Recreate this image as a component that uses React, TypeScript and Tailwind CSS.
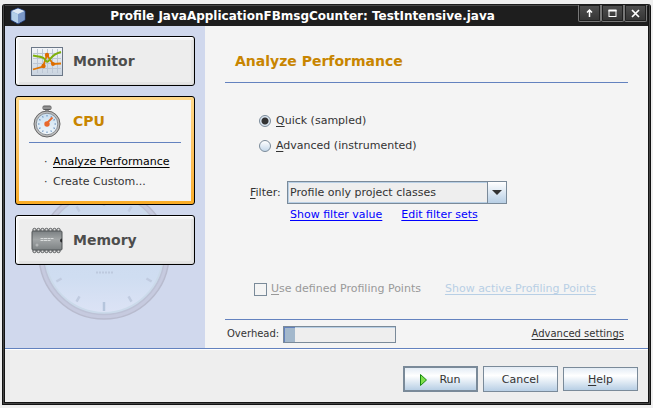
import { useState } from "react";
import type { ReactNode } from "react";

const cardBase = "relative rounded-[3px] border border-black";

function CubeIcon() {
  return (
    <svg width="18" height="18" viewBox="0 0 18 18" aria-hidden="true">
      <path d="M9 1 L16 4 V13 L9 17 L2 13 V4 Z" fill="#8fb0dc" stroke="#27407a" strokeWidth="1" />
      <path d="M9 1.500 L15.500 4 L9 7 L2.500 4 Z" fill="#dfe9f4" />
      <path d="M2.500 4.500 L9 7.300 V16.300 L2.500 12.700 Z" fill="#b4cfe8" />
      <path d="M9 7.300 L15.500 4.500 V12.700 L9 16.300 Z" fill="#7c99c8" />
    </svg>
  );
}

function MonitorIcon() {
  return (
    <svg width="32" height="29" viewBox="0 0 32 29" aria-hidden="true">
      <defs>
        <linearGradient id="chartBack" x1="0" y1="0" x2="0" y2="1">
          <stop offset="0" stopColor="#f4f6f8" />
          <stop offset="1" stopColor="#c9d3df" />
        </linearGradient>
      </defs>
      <rect x="0.500" y="0.500" width="31" height="28" fill="url(#chartBack)" stroke="#6b7787" />
      <path d="M6.500 2V26M11.500 2V26M16.500 2V26M21.500 2V26M26.500 2V26M2 6.500H30M2 11.500H30M2 16.500H30M2 21.500H30" stroke="#bcc6d4" strokeWidth="1" />
      <path d="M2 22.500 L12 19.500 L16 8 L22 17 L30 16.500" fill="none" stroke="#e07400" strokeWidth="1.800" />
      <circle cx="12.500" cy="19" r="2.200" fill="#dd6c00" />
      <circle cx="16" cy="8" r="2.200" fill="#dd6c00" />
      <circle cx="22" cy="17" r="2" fill="#dd6c00" />
      <path d="M2 8.500 C7 10 11 9 13 11.500 S16 16 18 13.500 S22 7 30 5" fill="none" stroke="#7fb00c" strokeWidth="2" />
    </svg>
  );
}

function StopwatchIcon() {
  return (
    <svg width="28" height="33" viewBox="0 0 28 33" aria-hidden="true">
      <defs>
        <linearGradient id="dial" x1="0" y1="0" x2="0" y2="1">
          <stop offset="0" stopColor="#c9dff0" />
          <stop offset="1" stopColor="#f0f6fb" />
        </linearGradient>
      </defs>
      <rect x="10" y="1" width="8" height="3.500" rx="1" fill="#b8b8b8" stroke="#5c5c5c" />
      <path d="M12 1V4.500M14 1V4.500M16 1V4.500" stroke="#5c5c5c" strokeWidth="0.800" />
      <path d="M12 5H16V8H12Z" fill="#9a9a9a" />
      <circle cx="14" cy="19" r="13" fill="#bcbcbc" stroke="#666" strokeWidth="1" />
      <circle cx="14" cy="19" r="10.800" fill="url(#dial)" stroke="#8b8f94" strokeWidth="1" />
      <g stroke="#5d86b8" strokeWidth="1">
        {[0, 30, 60, 90, 120, 150, 180, 210, 240, 270, 300, 330].map((a) => (
          <path key={a} d="M14 10V11.500" transform={`rotate(${a} 14 19)`} />
        ))}
      </g>
      <path d="M13 19 L19.500 12.500" stroke="#e8682c" strokeWidth="1.800" />
      <circle cx="14" cy="19" r="2.700" fill="#e8682c" />
    </svg>
  );
}

function MemoryIcon() {
  const pins = [3.5, 7.5, 11.5, 15.5, 19.5, 23.5, 27.5];
  return (
    <svg width="32" height="27" viewBox="0 0 32 27" aria-hidden="true">
      <defs>
        <linearGradient id="chip" x1="0" y1="0" x2="0" y2="1">
          <stop offset="0" stopColor="#7b8082" />
          <stop offset="0.450" stopColor="#a2a6a7" />
          <stop offset="1" stopColor="#7d8284" />
        </linearGradient>
      </defs>
      {pins.map((x) => (
        <g key={x} fill="#e0e0e0" stroke="#5a5d5f" strokeWidth="1">
          <circle cx={x} cy="3" r="1.700" />
          <circle cx={x} cy="24" r="1.700" />
        </g>
      ))}
      <rect x="1" y="4" width="30" height="19" rx="1" fill="url(#chip)" stroke="#505456" strokeWidth="1" />
      <path d="M9.500 11.500H22.500M9.500 13.500H19.500" stroke="#dadddd" strokeWidth="1" strokeDasharray="3 0.500" />
      <circle cx="6" cy="18" r="1.500" fill="#b3b6b7" />
      <path d="M31 11.500A2 2 0 0 0 31 15.500Z" fill="#2c2e30" />
    </svg>
  );
}

function WatermarkDial() {
  return (
    <svg className="absolute top-[159px] left-[31px]" width="136" height="137" viewBox="0 0 136 137" aria-hidden="true">
      <defs>
        <linearGradient id="face" x1="0" y1="0" x2="0" y2="1">
          <stop offset="0" stopColor="#cbd8ec" />
          <stop offset="0.700" stopColor="#cfddf1" />
          <stop offset="1" stopColor="#dce3f5" />
        </linearGradient>
      </defs>
      <circle cx="68" cy="69" r="65" fill="#c6cadf" stroke="#b8bbce" strokeWidth="1.500" />
      <circle cx="68" cy="69" r="60.500" fill="#cbdaea" stroke="#bdc2d6" strokeWidth="1.500" />
      <circle cx="68" cy="69" r="58" fill="url(#face)" />
      {[0, 30, 60, 90, 120, 150, 180, 210, 240, 270, 300, 330].map((a) => (
        <path key={a} d={a % 90 === 0 ? "M68 12V21" : "M68 14V20"} transform={`rotate(${a} 68 69)`} stroke={a % 90 === 0 ? "#b5c5dc" : "#c0cbe0"} strokeWidth="2.500" />
      ))}
      <path d="M60 87.500H77" stroke="#bdc9de" strokeWidth="2" strokeDasharray="2 1" />
    </svg>
  );
}

function NavCard({ icon, title }: { icon: ReactNode; title: string }) {
  return (
    <button
      type="button"
      className={`${cardBase} flex h-[50px] w-full items-center bg-[#ededed] text-left shadow-[inset_1px_1px_0_#fff,inset_-1px_-1px_0_#dcdcdc,inset_3px_3px_0_#f4f4f4,inset_-3px_-3px_0_#e4e4e4]`}
    >
      <span className="flex w-[57px] justify-center pl-1">{icon}</span>
      <span className="text-[14px] leading-5 font-bold text-[#4d4d4d]">{title}</span>
    </button>
  );
}

function WindowButton({ label, children }: { label: string; children: ReactNode }) {
  return (
    <button
      type="button"
      aria-label={label}
      className="flex h-[17px] w-[23px] items-center justify-center rounded-b-[2px] border border-t-0 border-[#777] bg-linear-to-b from-[#505050] to-[#343434] shadow-[inset_0_0_0_1px_#202020]"
    >
      <svg width="9" height="9" viewBox="0 0 9 9" fill="none" stroke="#fff" aria-hidden="true">
        {children}
      </svg>
    </button>
  );
}

const radioClass =
  "size-3 appearance-none rounded-full border border-[#7a8a99] bg-linear-to-b from-white to-[#c5d8ea] checked:bg-[radial-gradient(circle,#333_3px,#dce7f2_4px)]";

const actionBase =
  "flex w-[75px] items-center justify-center border-[#7a8a99] bg-linear-to-b from-[#e4ecf5] via-white via-35% to-[#b8cfe5] pt-0.5 text-[11px] leading-4 text-[#333]";

export default function App() {
  const [mode, setMode] = useState("quick");
  return (
    <div className="flex min-h-screen flex-col bg-[#efefef] px-0.5 pt-1 pb-[3px] font-['DejaVu_Sans',sans-serif] text-[11px] leading-4 text-[#333]">
      <div className="flex flex-1 flex-col rounded-t-[3px] border-[3px] border-t-0 border-double border-[#141414] bg-[#444]">
        <header className="flex h-[22px] items-start border-t border-[#1c1c1c] bg-[#1e1e1e] pr-px shadow-[inset_0_1px_0_#484848]">
          <span className="pt-0.5 pl-1">
            <CubeIcon />
          </span>
          <h1 className="flex-1 pt-[3px] text-center text-[12px] leading-4 font-bold text-white">
            Profile JavaApplicationFBmsgCounter: TestIntensive.java
          </h1>
          <div className="flex">
            <WindowButton label="Shade">
              <path d="M4.500 1V8M2 3.500L4.500 1L7 3.500" strokeWidth="1.500" />
            </WindowButton>
            <WindowButton label="Maximize">
              <rect x="1" y="1.500" width="7" height="6" strokeWidth="1" />
              <path d="M0.500 1.500H8.500" strokeWidth="2" />
            </WindowButton>
            <WindowButton label="Close">
              <path d="M1 1L8 8M8 1L1 8" strokeWidth="1.700" />
            </WindowButton>
          </div>
        </header>

        <div className="flex flex-1 border-b border-[#6382bf] bg-[#f4f4f4]">
          <nav className="relative flex w-[200px] shrink-0 flex-col gap-[10px] bg-[#d0d8ed] p-[10px]">
            <WatermarkDial />
            <NavCard icon={<MonitorIcon />} title="Monitor" />
            <section className={`${cardBase} bg-linear-to-b from-[#ffd98a] to-[#f9ac26] p-[3px]`}>
              <div className="h-[101px] bg-[#f4f4f4] px-[10px]">
                <div className="flex h-[43px] items-center border-b border-[#6382bf]">
                  <span className="flex w-11 pl-1">
                    <StopwatchIcon />
                  </span>
                  <h2 className="text-[14px] leading-5 font-bold text-[#c88500]">CPU</h2>
                </div>
                <ul className="pt-[11px] pl-[15px]">
                  <li className="flex h-5">
                    <span className="w-[9px]">·</span>
                    <a href="#analyze" className="text-black underline underline-offset-2">Analyze Performance</a>
                  </li>
                  <li className="flex h-5">
                    <span className="w-[9px]">·</span>
                    <a href="#custom">Create Custom...</a>
                  </li>
                </ul>
              </div>
            </section>
            <NavCard icon={<MemoryIcon />} title="Memory" />
          </nav>

          <main className="flex min-w-0 flex-1 flex-col px-5">
            <h2 className="border-b border-[#6382bf] px-[10px] pt-[25px] pb-[11px] text-[14px] leading-5 font-bold text-[#c88500]">
              Analyze Performance
            </h2>

            <fieldset className="flex flex-col gap-[9px] pt-[30px] pl-[34px]">
              <label className="flex items-center gap-[5px]">
                <input type="radio" name="mode" checked={mode === "quick"} onChange={() => setMode("quick")} className={radioClass} />
                <span><u className="underline-offset-2">Q</u>uick (sampled)</span>
              </label>
              <label className="flex items-center gap-[5px]">
                <input type="radio" name="mode" checked={mode === "advanced"} onChange={() => setMode("advanced")} className={radioClass} />
                <span><u className="underline-offset-2">A</u>dvanced (instrumented)</span>
              </label>
            </fieldset>

            <div className="flex items-center pt-[27px] pl-[25px]">
              <label htmlFor="filter" className="w-[37px]"><u className="underline-offset-2">F</u>ilter:</label>
              <div className="relative">
                <select id="filter" className="block h-[23px] w-[220px] appearance-none border border-[#7a8a99] bg-[#eee] pl-0.5 shadow-[inset_0_0_0_1px_#b8cfe5]">
                  <option>Profile only project classes</option>
                </select>
                <span className="pointer-events-none absolute inset-y-0 right-0 flex w-5 items-center justify-center border border-[#7a8a99] bg-linear-to-b from-white to-[#b8cfe5]">
                  <svg width="10" height="5" viewBox="0 0 10 5" aria-hidden="true"><path d="M0 0H10L5 5Z" fill="#333" /></svg>
                </span>
              </div>
            </div>
            <div className="flex gap-[19px] pt-[3px] pl-[65px] text-[#00f]">
              <a href="#show" className="underline underline-offset-2">Show filter value</a>
              <a href="#edit" className="underline underline-offset-2">Edit filter sets</a>
            </div>

            <div className="mt-auto flex items-center gap-6 pb-[22px] pl-[29px]">
              <label className="flex items-center gap-1 text-[#999]">
                <input type="checkbox" disabled className="size-[13px] appearance-none border border-[#7a8a99]" />
                <span><u className="underline-offset-2">U</u>se defined Profiling Points</span>
              </label>
              <a href="#points" aria-disabled="true" className="text-[#b8cfe5] underline underline-offset-2">Show active Profiling Points</a>
            </div>

            <div className="flex h-[29px] items-center border-t border-[#6382bf] pr-1 pl-0.5 text-[10px]">
              <span id="overhead" className="w-14">Overhead:</span>
              <div role="progressbar" aria-labelledby="overhead" aria-valuenow={10} className="h-[17px] w-[113px] border border-[#7a8a99] bg-[#eee] shadow-[inset_0_1px_0_#b8cfe5]">
                <div className="h-full w-[11px] border-t border-l border-[#6382bf] bg-[#a3b8cc]" />
              </div>
              <a href="#advanced" className="ml-auto underline underline-offset-2">Advanced settings</a>
            </div>
          </main>
        </div>

        <footer className="flex h-[53px] items-center justify-end gap-[5px] border-t border-white bg-[#eee] pt-[6px] pr-[10px]">
          <button type="button" className={`${actionBase} h-[26px] gap-3 border-2`}>
            <svg width="7" height="12" viewBox="0 0 7 12" aria-hidden="true"><path d="M0.500 0.500L6.500 6L0.500 11.500Z" fill="#7fe04a" stroke="#188a10" /></svg>
            Run
          </button>
          <button type="button" className={`${actionBase} h-[26px] border`}>Cancel</button>
          <button type="button" className={`${actionBase} h-6 border`}><span><u className="underline-offset-2">H</u>elp</span></button>
        </footer>
      </div>
    </div>
  );
}
